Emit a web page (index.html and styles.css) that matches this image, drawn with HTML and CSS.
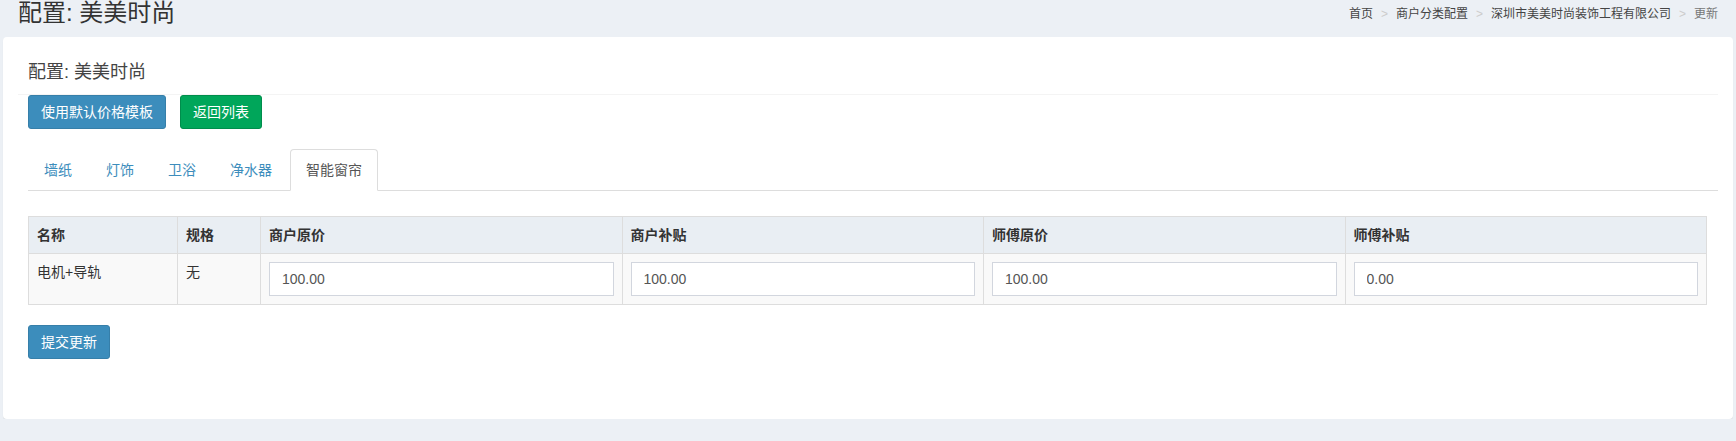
FILE: index.html
```html
<!DOCTYPE html>
<html lang="zh-CN">
<head>
<meta charset="utf-8">
<title>配置: 美美时尚</title>
<link rel="stylesheet" href="styles.css">
</head>
<body>
<header class="content-header">
  <h1 class="page-title">配置: 美美时尚</h1>
  <ol class="breadcrumb">
    <li><a href="#">首页</a></li>
    <li><a href="#">商户分类配置</a></li>
    <li><a href="#">深圳市美美时尚装饰工程有限公司</a></li>
    <li class="active">更新</li>
  </ol>
</header>
<main class="card">
  <div class="box-header"><h3 class="box-title">配置: 美美时尚</h3></div>
  <div class="actions">
    <a href="#" class="btn btn-primary">使用默认价格模板</a>
    <a href="#" class="btn btn-success">返回列表</a>
  </div>
  <ul class="nav-tabs">
    <li><a href="#">墙纸</a></li>
    <li><a href="#">灯饰</a></li>
    <li><a href="#">卫浴</a></li>
    <li><a href="#">净水器</a></li>
    <li class="active"><a href="#">智能窗帘</a></li>
  </ul>
  <div class="tab-content">
    <table class="price-table">
      <thead>
        <tr>
          <th class="col-name">名称</th>
          <th class="col-spec">规格</th>
          <th>商户原价</th>
          <th>商户补贴</th>
          <th>师傅原价</th>
          <th>师傅补贴</th>
        </tr>
      </thead>
      <tbody>
        <tr>
          <td>电机+导轨</td>
          <td>无</td>
          <td><input class="form-control" type="text" value="100.00"></td>
          <td><input class="form-control" type="text" value="100.00"></td>
          <td><input class="form-control" type="text" value="100.00"></td>
          <td><input class="form-control" type="text" value="0.00"></td>
        </tr>
      </tbody>
    </table>
    <button type="button" class="btn btn-primary submit">提交更新</button>
  </div>
</main>
</body>
</html>
```

FILE: styles.css
```css
* { box-sizing: border-box; }

body {
  margin: 0;
  background: #ecf0f5;
  font-family: "Liberation Sans", "Noto Sans CJK SC", sans-serif;
  font-size: 14px;
  color: #333;
}

.content-header {
  display: flex;
  justify-content: space-between;
  align-items: flex-start;
  height: 37px;
  padding: 0 18px;
}

.page-title {
  margin: 0;
  padding-top: 1px;
  font-size: 24px;
  line-height: 24px;
  font-weight: normal;
  color: #333;
}

.breadcrumb {
  display: flex;
  margin: 6px 0 0;
  padding: 0;
  list-style: none;
  font-size: 12px;
  line-height: 16px;
}

.breadcrumb li + li::before {
  content: ">";
  padding: 0 8px;
  color: #ccc;
}

.breadcrumb a {
  color: #444;
  text-decoration: none;
}

.breadcrumb .active {
  color: #777;
}

.card {
  display: block;
  margin: 0 3px;
  padding: 0 15px 60px;
  background: #fff;
  border-radius: 4px;
  box-shadow: 0 1px 1px rgba(0, 0, 0, 0.08);
}

.box-header {
  padding: 25px 10px 12px;
  border-bottom: 1px solid #f4f4f4;
}

.box-title {
  margin: 0;
  font-size: 18px;
  line-height: 20px;
  font-weight: normal;
  color: #444;
}

.actions {
  display: flex;
  gap: 14px;
  padding: 0 10px;
}

.btn {
  display: inline-block;
  padding: 6px 12px;
  font-family: inherit;
  font-size: 14px;
  line-height: 20px;
  border: 1px solid transparent;
  border-radius: 3px;
  color: #fff;
  text-decoration: none;
  cursor: pointer;
}

.btn-primary {
  background: #3c8dbc;
  border-color: #367fa9;
}

.btn-success {
  background: #00a65a;
  border-color: #008d4c;
}

.nav-tabs {
  display: flex;
  margin: 20px 0 0 10px;
  padding: 0;
  list-style: none;
  border-bottom: 1px solid #ddd;
}

.nav-tabs li {
  margin-right: 2px;
  margin-bottom: -1px;
}

.nav-tabs a {
  display: block;
  padding: 10px 15px;
  line-height: 20px;
  border: 1px solid transparent;
  border-radius: 4px 4px 0 0;
  color: #3c8dbc;
  text-decoration: none;
}

.nav-tabs .active a {
  color: #555;
  background: #fff;
  border-color: #ddd #ddd transparent;
}

.tab-content {
  padding: 25px 11px 0 10px;
}

.price-table {
  width: 100%;
  border-collapse: collapse;
  table-layout: fixed;
  border: 1px solid #ddd;
}

.price-table th,
.price-table td {
  padding: 8px;
  border: 1px solid #ddd;
  line-height: 20px;
  text-align: left;
  vertical-align: top;
  color: #333;
}

.price-table th {
  background: #e9eef3;
  font-weight: bold;
}

.price-table td {
  background: #f9f9f9;
}

.price-table .col-name { width: 149px; }
.price-table .col-spec { width: 83px; }

.form-control {
  display: block;
  width: 100%;
  height: 34px;
  padding: 6px 12px;
  font-family: inherit;
  font-size: 14px;
  line-height: 20px;
  color: #555;
  background: #fff;
  border: 1px solid #d2d6de;
  border-radius: 0;
}

.submit {
  margin-top: 20px;
}
```
